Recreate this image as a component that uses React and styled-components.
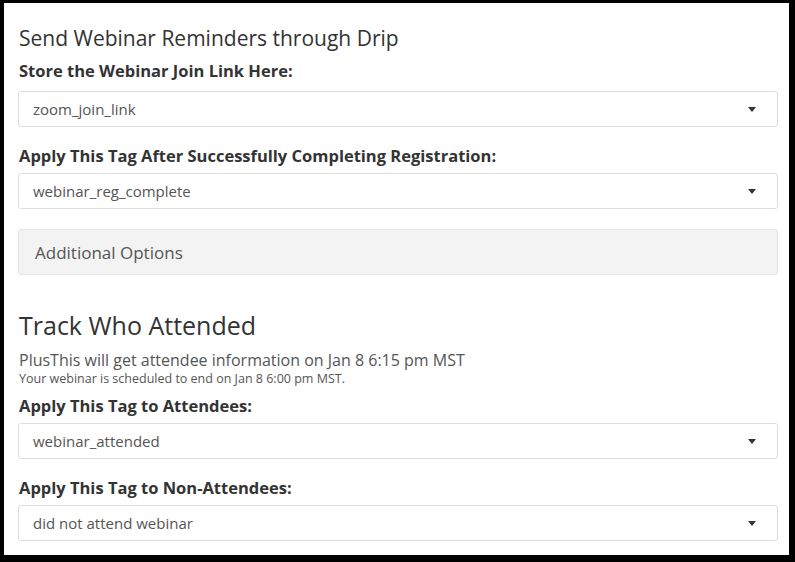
import React from 'react';
import styled, { createGlobalStyle } from 'styled-components';

const GlobalStyle = createGlobalStyle`
	html, body {
		margin: 0;
		padding: 0;
		background: #000;
	}
	body {
		font-family: "Open Sans", "Liberation Sans", sans-serif;
		color: #333;
	}
`;

const Frame = styled.div`
	width: 795px;
	height: 562px;
	box-sizing: border-box;
	padding: 3px 6px 7px 4px;
	background: #000;
`;

const Panel = styled.div`
	height: 100%;
	box-sizing: border-box;
	background: #fff;
	padding: 21px 11px 0 14px;
	overflow: hidden;
`;

const Heading = styled.h2`
	margin: 0 0 ${(p) => p.$gap}px 1px;
	font-size: ${(p) => p.$size}px;
	line-height: ${(p) => p.$size + 7}px;
	font-weight: 400;
	color: #333;
`;

const Field = styled.div`
	margin-bottom: 18px;
`;

const Label = styled.div`
	margin: 0 0 ${(p) => p.$gap ?? 6}px 1px;
	font-size: 16.5px;
	line-height: 22px;
	font-weight: 700;
	color: #333;
`;

const SelectBox = styled.div`
	height: 36px;
	box-sizing: border-box;
	display: flex;
	align-items: center;
	justify-content: space-between;
	padding: 0 21px 0 14px;
	border: 1px solid #dedede;
	border-radius: 3px;
	background: #fff;
	font-size: 15px;
	color: #555;
`;

const Caret = styled.span`
	width: 0;
	height: 0;
	border-left: 4px solid transparent;
	border-right: 4px solid transparent;
	border-top: 5px solid #333;
`;

const OptionsBar = styled.div`
	height: 46px;
	box-sizing: border-box;
	display: flex;
	align-items: center;
	padding: 0 16px;
	margin: 20px 0 34px;
	background: #f3f3f3;
	border: 1px solid #e4e4e4;
	border-radius: 3px;
	font-size: 17px;
	color: #555;
`;

const Notes = styled.div`
	margin-bottom: 8px;
`;

const Note = styled.p`
	margin: 0 0 0 1px;
	font-size: ${(p) => (p.$small ? 12.5 : 16)}px;
	line-height: ${(p) => (p.$small ? 16 : 22)}px;
	color: #555;
`;

function Select({ value }) {
	return (
		<SelectBox>
			<span>{value}</span>
			<Caret />
		</SelectBox>
	);
}

export default function App() {
	return (
		<>
			<GlobalStyle />
			<Frame>
				<Panel>
					<Heading $size={21} $gap={8}>Send Webinar Reminders through Drip</Heading>
					<Field>
						<Label $gap={9}>Store the Webinar Join Link Here:</Label>
						<Select value="zoom_join_link" />
					</Field>
					<Field>
						<Label>Apply This Tag After Successfully Completing Registration:</Label>
						<Select value="webinar_reg_complete" />
					</Field>
					<OptionsBar>Additional Options</OptionsBar>

					<Heading $size={25} $gap={8}>Track Who Attended</Heading>
					<Notes>
						<Note>PlusThis will get attendee information on Jan 8 6:15 pm MST</Note>
						<Note $small>Your webinar is scheduled to end on Jan 8 6:00 pm MST.</Note>
					</Notes>
					<Field>
						<Label>Apply This Tag to Attendees:</Label>
						<Select value="webinar_attended" />
					</Field>
					<Field>
						<Label>Apply This Tag to Non-Attendees:</Label>
						<Select value="did not attend webinar" />
					</Field>
				</Panel>
			</Frame>
		</>
	);
}
